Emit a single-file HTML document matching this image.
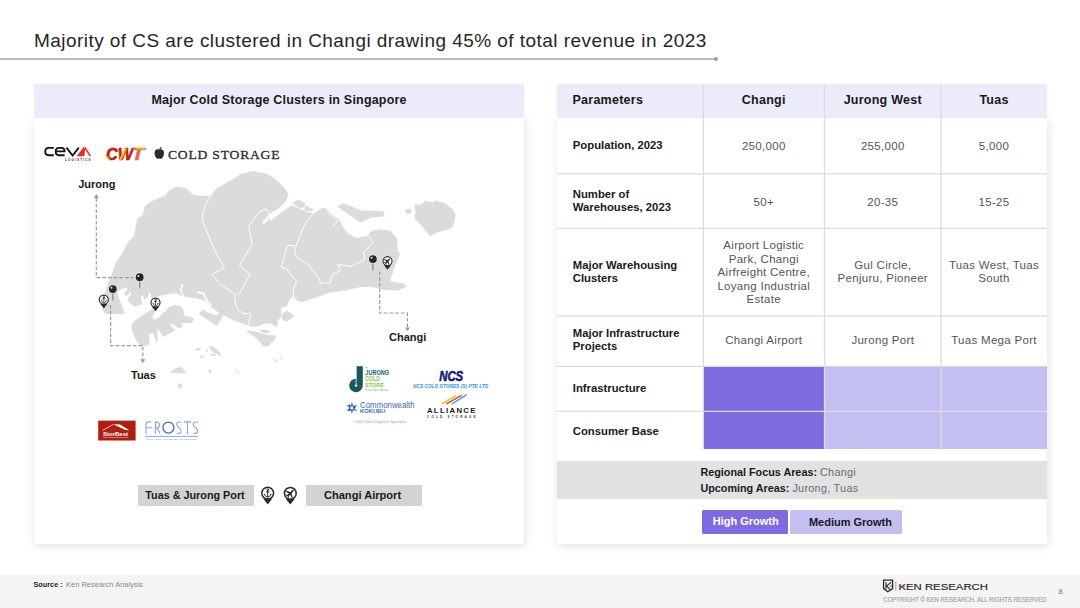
<!DOCTYPE html>
<html><head><meta charset="utf-8">
<style>
html,body{margin:0;padding:0;}
body{width:1080px;height:608px;position:relative;overflow:hidden;background:#fff;font-family:"Liberation Sans",sans-serif;color:#1f1f1f;}
.a{position:absolute;}
.t{position:absolute;line-height:1;white-space:nowrap;}
.b{font-weight:700;}
.c{text-align:center;}
.panel{position:absolute;background:#fff;box-shadow:1px 2px 9px rgba(0,0,0,0.12);}
.hdr{position:absolute;background:#ecebf9;}
.vl{position:absolute;width:1.3px;background:#dadada;}
.hl{position:absolute;height:1.3px;background:#dadada;}
.val{color:#555;font-size:11.5px;letter-spacing:0.3px;}
.lbl{font-size:11.3px;font-weight:700;color:#1a1a1a;}
</style></head><body>

<!-- Title -->
<div class="t" style="left:34px;top:31px;font-size:19px;letter-spacing:0.45px;color:#262626;">Majority of CS are clustered in Changi drawing 45% of total revenue in 2023</div>
<div class="a" style="left:0;top:58px;width:716px;height:1.8px;background:#bdbdbd;"></div>
<div class="a" style="left:714.3px;top:56.9px;width:4.2px;height:4.2px;border-radius:50%;background:#9a9a9a;"></div>

<!-- Left panel -->
<div class="panel" style="left:34px;top:118px;width:490px;height:426px;"></div>
<div class="hdr" style="left:34px;top:84px;width:490px;height:34px;"></div>
<div class="t b" style="left:151.5px;top:93.6px;font-size:12.5px;letter-spacing:0.2px;color:#1a1a1a;">Major Cold Storage Clusters in Singapore</div>

<!-- MAP -->
<svg class="a" style="left:0;top:0" width="1080" height="608" viewBox="0 0 1080 608">
<g fill="#dbdbdb">
<!-- mainland -->
<path d="M103,311 L106,314 L125,314 L116.7,291.9 L122,289 L126.5,287.6 L127.5,289.5 L123.5,293.5 L127,296 L130.5,292 L131.5,294 L127.5,298.5 L129,302.2 L134.4,306.7 L141.9,304.4 L141.1,296.3 L142.6,294.8 L144,299.3 L147,298.5 L149.3,292.6 L150.7,293.3 L151.5,299.3 L158,296.3 L161.9,295.5 L169.3,294.1 L176.7,293.3 L184,297 L190,297.5 L197,298.5 L205,300.5 L210.9,306.4 L218.3,312.4 L217.5,315.3 L213.1,314.6 L210.1,313.1 L207.2,312.4 L202.8,309 L199.1,314.2 L216.8,325.7 L223.5,315.3 L235.3,321.2 L241.8,323 L249,326.2 L256.3,326.7 L263.5,324 L269.9,323.1 L274.4,325.8 L277.1,326.7 L278,320.3 L279.8,318.5 L281.6,315.8 L280.7,308.6 L287.1,305.9 L288.9,300.4 L293.4,295.9 L296.1,299.5 L297.9,301.3 L302.2,302 L316,297.4 L329.9,292.8 L346,290.5 L360,287.1 L371.4,287 L385.3,290 L398,290.5 L406,287 L403.7,283.6 L389.9,281.3 L394.5,267.5 L400.2,253.7 L398,251.4 L396.8,237.6 L389.9,230.7 L379.6,229.2 L371.5,230.7 L367.4,235.8 L356.2,237.9 L347,232.8 L343,226.7 L339.9,220.5 L330.7,213.4 L325.1,207.8 L321.6,208.3 L313.4,213.9 L302.2,209.9 L291.9,205.3 L281.5,212.2 L270,221.4 L270,214.5 L286.1,203 L288.4,193.8 L284,187.6 L276,179.6 L266.8,173.8 L253,171 L241.4,173.8 L229.9,180.7 L216.1,188.8 L210.4,195.7 L200,195.7 L192.6,194.5 L186.7,188.6 L176.8,186.6 L169,190.6 L165,195.5 L153,200.5 L145.3,205.4 L142.3,215.3 L137.4,218.2 L135.4,227 L134.4,235 L127.5,242.9 L122.6,252.8 L115.7,262.6 L112.7,271.8 L108.7,281.7 L104,295 Z"/>
<!-- Jurong island -->
<path d="M131.2,325.5 L134.9,320.6 L145.6,313.2 L152.1,309 L155.4,310.7 L152.1,316.9 L154.2,319.7 L160.4,316.4 L161.2,314 L165.3,311.5 L167.8,307.8 L174.3,304.9 L180.1,305.8 L183.4,309.9 L184.2,315.6 L190.8,316.9 L194.5,319.3 L190.8,323 L181.7,323 L182.6,326.3 L179.3,328.4 L173.5,324.7 L169.4,323.8 L175.2,330.4 L162.8,337 L159.5,330.4 L157.1,329.6 L157.9,341.1 L156.3,341.9 L153,332.9 L148.8,334.5 L149.7,344.4 L141.4,346.9 L136.5,341.1 L132,331.3 Z"/>
<!-- sentosa etc -->
<path d="M246.3,330.3 L253.6,331.2 L259.9,333 L267.1,334.8 L276.2,335.7 L274.4,340.2 L270.8,343 L269,345.7 L263.5,346.6 L258.1,340.2 L252.7,335.7 L246.3,331.2 Z"/>
<path d="M259,330.5 L264,329.4 L269,330.5 L270.8,332.5 L265,333.2 Z"/>
<path d="M282.5,313.1 L287.1,310.8 L294.3,315.8 L293.4,317.6 L285.2,322.1 L281.6,318.5 Z"/>
<!-- Pulau Ubin -->
<path d="M336.8,206.3 L343,203.2 L351.1,206.3 L361.3,210.4 L372,210.8 L383.7,211.4 L384.7,216.5 L371.5,217.5 L360.3,222.6 L353.1,217.5 L343,210.4 Z"/>
<!-- Pulau Tekong -->
<path d="M414.1,204.6 L421.5,204.6 L425.2,200.6 L432.6,202.4 L435.2,200.2 L444.4,203.1 L453.3,209.8 L455.6,215.7 L452.6,227.6 L448.1,229.4 L436.3,232.8 L430.4,236.5 L421.5,226.1 L414.4,218 L415.6,212 Z"/>
<ellipse cx="408.4" cy="211.2" rx="3.2" ry="2.5"/>
<!-- small islands north -->
<path d="M293,202.2 L298.1,199.7 L305.3,203.2 L304.3,206.3 L300.2,208.8 L294.1,204.3 Z"/>
<path d="M305.3,205.3 L313.4,209.3 L312.4,211.4 L304.3,210.4 Z"/>
<!-- southern islands -->
<path d="M194.5,349.5 L198,347.8 L201.5,348.6 L198.5,350.8 Z"/>
<path d="M205.5,348 L207.3,349.5 L208.5,352.7 L206.5,351.5 Z"/>
<path d="M209.8,345.8 L213,346.5 L218,350.5 L222.5,356 L219,355 L214,352.5 L209.8,349 Z"/>
<path d="M210,353.5 L214.5,353.8 L217,355.5 L212,355.8 Z"/>
<path d="M200,355 L203.5,356.5 L204,358 L200.5,357.5 Z"/>
<path d="M170.1,372.1 L176.4,367.9 L180.6,366.5 L183.3,369.3 L186.1,372.1 L183.3,373.5 L170.8,372.8 Z"/>
<path d="M208.5,368.5 L211.5,371 L210.5,373.8 L208.8,372 Z"/>
<path d="M234,368 L237.5,371.5 L240,374 L237.5,373.5 Z"/>
<path d="M272.5,357.5 L276,360.5 L277.5,362.5 L275,362 Z"/>
<path d="M279.5,355.5 L282.5,358.5 L283,360 L280.5,358.5 Z"/>
<path d="M177.5,384.5 L181.5,383 L182.5,386.5 L178.5,389 Z"/>
</g>
<!-- white river / boundaries -->
<g fill="none" stroke="#fff" stroke-width="1" stroke-linejoin="round">
<path d="M210.7,196.1 Q205.5,203 205,207.6 Q201.5,214 202.7,221.4 Q208,234 213,246.8 Q218,258 224.5,267.5 L211.9,274.4 L219.9,283.6 L226.4,288.7 L236,294.6 L234.6,299.1 L236.5,306 L237.6,309.5 L242.9,313.4 L249.5,313.4 L250.8,316 L248.2,322.6 L249.5,326"/>
<path d="M270,216 L266,208.8 L259.1,212.2 L248.7,226.1 L252.2,244.5 L239.5,265.2 L249.9,274.4 L238.4,295.1"/>
<path d="M312.6,214.5 L306.8,221.4 L302.2,229.5 L297.6,242.2 L294.2,251.4 L297.6,258.3 L306.8,262.9 L319.5,279 L320.7,283.6 L330.4,282.5 L331.5,275.6 L340.7,269.9 L337.3,264.7 L351.1,266.4 L364.9,259.5 L363.7,252.6 L372.9,242.3 L368.3,235.4"/>
<path d="M295.3,245.6 L287.3,245.6 L283.8,258.3 L281.5,267.5 L286.1,268.6 L296.5,281.3 L293,290.5 L294.2,299.7 L289.6,300.9 L287.3,308.9 L283,312"/>

</g>
<g fill="none" stroke="#fff" stroke-width="3" stroke-linecap="round">
<path d="M288.6,200.3 L280,210 L272,214 L264,222"/>
</g>
<g fill="none" stroke="#fff" stroke-width="1.6" stroke-linecap="round">
<path d="M182.6,284.4 L180.5,290 L184,297"/>
<path d="M197.6,292.4 L202.8,293.1 L205.7,297.6 L207.2,301.3 L210.9,305"/>
<path d="M326.7,211.4 L337.9,221.6 L332.8,225.6" stroke-width="1"/>
</g>
</svg>

<!-- /MAP -->
<!-- PINS -->
<svg class="a" style="left:0;top:0" width="1080" height="608" viewBox="0 0 1080 608">
<defs>
<g id="pushpin">
<line x1="0" y1="3" x2="0" y2="11.3" stroke="#8d8d8d" stroke-width="1.3"/>
<circle r="4.4" fill="#fff" opacity="0.7"/>
<circle r="3.9" fill="#262626"/>
<circle cx="-1.3" cy="-1.3" r="1" fill="#fff" opacity="0.9"/>
</g>
<g id="pinbase">
<circle r="7.3" fill="#fff" opacity="0.55"/>
<circle r="5.9" fill="#fff" stroke="#2a2a2a" stroke-width="1.5"/>
<path d="M-4.6,5.4 L4.6,5.4 L0,11.3 Z" fill="#2a2a2a"/>
</g>
<g id="anchorpin">
<use href="#pinbase"/>
<g stroke="#2a2a2a" stroke-width="0.95" fill="none" stroke-linecap="round">
<circle cx="0" cy="-3.3" r="0.85"/>
<line x1="0" y1="-2.4" x2="0" y2="3.9"/>
<line x1="-1.4" y1="-1.2" x2="1.4" y2="-1.2"/>
<path d="M-3.2,1.3 Q-2.6,3.9 0,3.9 Q2.6,3.9 3.2,1.3"/>
</g>
<path d="M-3.9,1.8 L-3.2,0.6 L-2.4,1.9 Z M3.9,1.8 L3.2,0.6 L2.4,1.9 Z" fill="#2a2a2a"/>
</g>
<g id="planepin">
<use href="#pinbase"/>
<g transform="rotate(45) scale(1.08)">
<path d="M0,-4.2 C0.7,-4.2 0.8,-3.4 0.8,-2.7 L0.8,-0.9 L4.3,1.1 L4.3,2.1 L0.8,1 L0.8,2.7 L2,3.6 L2,4.2 L0,3.7 L-2,4.2 L-2,3.6 L-0.8,2.7 L-0.8,1 L-4.3,2.1 L-4.3,1.1 L-0.8,-0.9 L-0.8,-2.7 C-0.8,-3.4 -0.7,-4.2 0,-4.2 Z" fill="#2a2a2a"/>
</g>
</g>
</defs>
<g fill="none" stroke="#9b9b9b" stroke-width="1.2" stroke-dasharray="3.7 2">
<path d="M96.3,198 L96.3,277.6 L133.5,277.6"/>
<path d="M110.6,305 L110.6,345.6 L142.8,345.6 L142.8,359.5"/>
<path d="M379.7,271.5 L379.7,313 L407.4,313 L407.4,327.5"/>
</g>
<g fill="#9b9b9b">
<path d="M93.8,198.2 L96.3,194 L98.8,198.2 Z"/>
<path d="M140.3,359.3 L142.8,363.2 L145.3,359.3 Z"/>
<path d="M404.9,327.4 L407.4,331.2 L409.9,327.4 Z"/>
</g>
<use href="#pushpin" x="139.7" y="277.2"/>
<use href="#pushpin" x="112.8" y="289.1"/>
<use href="#pushpin" x="372.9" y="259.1"/>
<use href="#anchorpin" transform="translate(103.8,299.7) scale(0.77)"/>
<use href="#anchorpin" transform="translate(155.5,302.6) scale(0.77)"/>
<use href="#planepin" transform="translate(387.5,261.1) scale(0.77)"/>
<use href="#anchorpin" transform="translate(267.7,493.1)"/>
<use href="#planepin" transform="translate(290.3,493.3)"/>
</svg>

<div class="t b" style="left:78.2px;top:179px;font-size:11px;color:#1a1a1a;">Jurong</div>
<div class="t b" style="left:389px;top:332.4px;font-size:11px;color:#1a1a1a;">Changi</div>
<div class="t b" style="left:131px;top:370.2px;font-size:11px;color:#1a1a1a;">Tuas</div>
<div class="a" style="left:138.3px;top:485.3px;width:116px;height:20.3px;background:#d3d3d3;"></div>
<div class="a" style="left:305.8px;top:485.3px;width:116.7px;height:20.3px;background:#d3d3d3;"></div>
<div class="t b" style="left:145.3px;top:489.5px;font-size:10.8px;color:#1a1a1a;">Tuas &amp; Jurong Port</div>
<div class="t b" style="left:323.9px;top:489.5px;font-size:11.1px;color:#1a1a1a;">Changi Airport</div>
<!-- /PINS -->
<!-- LOGOS -->
<svg class="a" style="left:0;top:0" width="1080" height="608" viewBox="0 0 1080 608">
<!-- CEVA -->
<g fill="none" stroke="#141414" stroke-width="1.85" stroke-linecap="butt">
<path d="M53.8,147.9 H48.6 Q45.3,147.9 45.3,151.55 Q45.3,155.2 48.6,155.2 H53.8"/>
<path d="M64.6,155.2 H58.9 Q55.7,155.2 55.7,151.55 Q55.7,147.9 58.9,147.9 H61.4 Q64.6,147.9 64.6,151.3 H56"/>
<path d="M66.4,147.6 L72.6,155.6 L78.8,147.6"/>
</g>
<path d="M76.6,156.2 L83.7,146.9 L85.2,149.2 L84.3,156.2 Z" fill="#ee2a24"/>
<path d="M84.8,147.3 L90.3,156" stroke="#ee2a24" stroke-width="1.5" fill="none"/>
<text x="65.1" y="160.9" font-family="Liberation Sans" font-weight="700" font-size="3" textLength="25.5" lengthAdjust="spacing" fill="#333">LOGISTICS</text>
<!-- CWT -->
<text x="106" y="160.3" font-family="Liberation Sans" font-weight="700" font-style="italic" font-size="17" textLength="27" lengthAdjust="spacingAndGlyphs" fill="#c21d14" stroke="#b81a12" stroke-width="0.6">CW</text>
<text x="131" y="160.3" font-family="Liberation Sans" font-weight="700" font-style="italic" font-size="17" textLength="13.5" lengthAdjust="spacingAndGlyphs" fill="#dc6a5e" stroke="#dc6a5e" stroke-width="0.4">T</text>
<path d="M106.8,156.5 L109.5,160.2" stroke="#ffcc00" stroke-width="1.8"/>
<path d="M110.5,149.5 L114,148" stroke="#e8221a" stroke-width="1.6"/>
<path d="M120,160.2 L126,148.4" stroke="#ffcc00" stroke-width="2"/>
<path d="M136.5,148.4 L145,148.4" stroke="#ffcc00" stroke-width="1.5" fill="none"/>

<!-- apple -->
<g fill="#2b2b2b">
<path d="M159.3,149.6 C157.9,148.8 154.6,148.9 154.6,152.9 C154.6,156 156.5,158.8 157.9,158.8 C158.6,158.8 158.8,158.4 159.3,158.4 C159.8,158.4 160.1,158.8 160.8,158.8 C162.2,158.8 164,156 164,152.9 C164,148.9 160.7,148.8 159.3,149.6 Z"/>
<path d="M159.4,149.4 C159.3,148 160.3,147.1 161.6,146.9 C161.6,148.2 160.7,149.2 159.4,149.4 Z"/>
</g>
<text x="168" y="158.8" font-family="Liberation Serif" font-size="12.2" letter-spacing="0.7" textLength="112.3" lengthAdjust="spacingAndGlyphs" fill="#2e2e2e" stroke="#2e2e2e" stroke-width="0.3">COLD STORAGE</text>

<!-- Jurong Cold Store -->
<g fill="#16595a">
<rect x="356.6" y="366.2" width="6.2" height="19.6"/>
<path d="M362.8,385.5 A6.8,6.8 0 1 1 356.6,378.7 L356.6,385.5 Z"/>
</g>
<circle cx="356" cy="385.6" r="1.2" fill="#fff"/>
<line x1="356" y1="378" x2="356" y2="384.8" stroke="#fff" stroke-width="0.6"/>
<circle cx="366.6" cy="367.6" r="0.8" fill="#8cc63e"/>
<text x="365.3" y="374.6" font-family="Liberation Sans" font-weight="700" font-size="6.4" textLength="23.7" lengthAdjust="spacingAndGlyphs" fill="#1a5f7a">JURONG</text>
<text x="365" y="381" font-family="Liberation Sans" font-weight="700" font-size="6.4" textLength="15" lengthAdjust="spacingAndGlyphs" fill="#8cc63e">COLD</text>
<text x="365" y="386.6" font-family="Liberation Sans" font-weight="700" font-size="6.2" textLength="19" lengthAdjust="spacingAndGlyphs" fill="#8cc63e">STORE</text>
<text x="365.3" y="390.8" font-family="Liberation Sans" font-size="3" textLength="23.4" lengthAdjust="spacingAndGlyphs" fill="#9aa6bb">Fresh ideas Always</text>

<!-- NCS -->
<text x="439.2" y="381" font-family="Liberation Sans" font-weight="700" font-style="italic" font-size="14.2" textLength="24" lengthAdjust="spacingAndGlyphs" fill="#121a78" stroke="#121a78" stroke-width="0.6">NCS</text>
<text x="413" y="387.8" font-family="Liberation Sans" font-weight="700" font-style="italic" font-size="6.2" textLength="75.2" lengthAdjust="spacingAndGlyphs" fill="#2a95f0">NCS COLD STORES (S) PTE LTD</text>

<!-- Commonwealth Kokubu -->
<polygon points="351.90,401.70 353.20,405.65 357.27,404.80 354.50,407.90 357.27,411.00 353.20,410.15 351.90,414.10 350.60,410.15 346.53,411.00 349.30,407.90 346.53,404.80 350.60,405.65" fill="#4a7cbf"/>
<circle cx="351.9" cy="407.9" r="1.4" fill="#fff"/>
<circle cx="349.5" cy="405.3" r="0.8" fill="#0d2a7a"/>
<circle cx="354.5" cy="407.5" r="0.8" fill="#0d2a7a"/>
<circle cx="349.2" cy="410.3" r="0.8" fill="#0d2a7a"/>
<text x="360.1" y="408.2" font-family="Liberation Sans" font-size="8.2" textLength="54.5" lengthAdjust="spacingAndGlyphs" fill="#3b66b3">Commonwealth</text>
<text x="360.1" y="413.4" font-family="Liberation Sans" font-weight="700" font-size="6" textLength="25.3" lengthAdjust="spacingAndGlyphs" fill="#3b66b3">KOKUBU</text>
<text x="353.7" y="423.1" font-family="Liberation Serif" font-size="4.2" textLength="52.5" lengthAdjust="spacingAndGlyphs" fill="#7f9ad0">Cold Chain Logistics Specialist</text>

<!-- Alliance -->
<g stroke-width="1.5" stroke-linecap="round" fill="none">
<path d="M442.6,403.3 L455.5,396" stroke="#f4c21a"/>
<path d="M446.8,403.6 L461,395.6" stroke="#d8473c"/>
<path d="M452.4,403.6 L466,395" stroke="#4aa6e2"/>
</g>
<text x="426.9" y="413" font-family="Liberation Sans" font-weight="700" font-size="7.8" textLength="48.6" lengthAdjust="spacing" fill="#1b1b1b">ALLIANCE</text>
<text x="427" y="417.6" font-family="Liberation Sans" font-weight="700" font-size="3" textLength="48.5" lengthAdjust="spacing" fill="#333">COLD STORAGE</text>

<!-- StorBest -->
<rect x="98.2" y="420.6" width="37.4" height="19.9" fill="#b01e12"/>
<path d="M102.7,430.4 L113.4,424.4" stroke="#fff" stroke-width="0.7" fill="none"/>
<path d="M113.2,424.2 L120,424.4 L129.4,430.2 L125.5,430 Z" fill="#fff"/>
<text x="102.9" y="436" font-family="Liberation Sans" font-weight="700" font-size="6.2" textLength="25.2" lengthAdjust="spacingAndGlyphs" fill="#fff">StorBest</text>
<line x1="103" y1="437.6" x2="128.4" y2="437.6" stroke="#fff" stroke-width="0.5" opacity="0.85"/>

<!-- FROSTS -->
<g fill="none" stroke="#86a6db" stroke-width="1.1" stroke-linecap="round">
<path d="M146,433.4 L146,424.5 Q146,422 149,421.9 L150.5,421.9"/>
<path d="M146.2,427.7 L151.6,427.7"/>
<path d="M155.4,433.4 L155.4,422.1 Q159.6,421.9 159.6,424.9 Q159.6,427.9 155.6,427.9 L157.2,427.9 L159.9,433.4"/>
<path d="M181,422.3 Q176.6,421.3 176.6,424.2 Q176.6,426.3 179,427.8 Q181.3,429.4 181,431.6 Q180.6,433.6 177,433.3"/>
<path d="M184.2,421.9 L190.9,421.9 M187.5,421.9 L187.5,433.4"/>
<path d="M197.6,422.3 Q193.2,421.3 193.2,424.2 Q193.2,426.3 195.6,427.8 Q197.9,429.4 197.6,431.6 Q197.2,433.6 193.6,433.3"/>
</g>
<circle cx="168.4" cy="427.6" r="5.5" fill="none" stroke="#3f6fb0" stroke-width="1.3"/>
<line x1="145" y1="436.4" x2="197.8" y2="436.4" stroke="#6d92d3" stroke-width="0.8"/>
<text x="145.5" y="439.9" font-family="Liberation Sans" font-size="2.4" textLength="52" lengthAdjust="spacingAndGlyphs" fill="#7d9bd3">YOUR FOOD AND BEVERAGE SOLUTION</text>
</svg>

<!-- /LOGOS -->
<!-- Right panel -->
<div class="panel" style="left:557px;top:118px;width:490px;height:426px;"></div>
<div class="hdr" style="left:557px;top:84px;width:490px;height:34px;"></div>


<!-- Table header texts -->
<div class="t b" style="left:572.5px;top:93.6px;font-size:12.5px;letter-spacing:0.25px;color:#1a1a1a;">Parameters</div>
<div class="t b c" style="left:703px;width:121.5px;top:93.6px;font-size:12.5px;letter-spacing:0.25px;color:#1a1a1a;">Changi</div>
<div class="t b c" style="left:824.5px;width:116.5px;top:93.6px;font-size:12.5px;letter-spacing:0.25px;color:#1a1a1a;">Jurong West</div>
<div class="t b c" style="left:941px;width:106px;top:93.6px;font-size:12.5px;letter-spacing:0.25px;color:#1a1a1a;">Tuas</div>

<!-- purple cells -->
<div class="a" style="left:703.7px;top:366.8px;width:120.8px;height:82.2px;background:#7e6bdf;"></div>
<div class="a" style="left:824.5px;top:366.8px;width:222.5px;height:82.2px;background:#c3bff1;"></div>

<!-- grid lines -->
<svg class="a" style="left:0;top:0" width="1080" height="608" viewBox="0 0 1080 608">
<g stroke="#dcdcdc" stroke-width="1.3">
<line x1="703.4" y1="84" x2="703.4" y2="449"/>
<line x1="824.5" y1="84" x2="824.5" y2="449"/>
<line x1="941" y1="84" x2="941" y2="449"/>
<line x1="557" y1="173.9" x2="1047" y2="173.9"/>
<line x1="557" y1="228.4" x2="1047" y2="228.4"/>
<line x1="557" y1="315.9" x2="1047" y2="315.9"/>
<line x1="557" y1="366.4" x2="1047" y2="366.4"/>
<line x1="557" y1="411.4" x2="1047" y2="411.4"/>
</g>
</svg>
<!-- row labels -->
<div class="t lbl" style="left:572.8px;top:139.7px;">Population, 2023</div>
<div class="t lbl" style="left:572.8px;top:188px;line-height:13.2px;">Number of<br>Warehouses, 2023</div>
<div class="t lbl" style="left:572.8px;top:258.9px;line-height:13.2px;">Major Warehousing<br>Clusters</div>
<div class="t lbl" style="left:572.8px;top:327.1px;line-height:13.2px;">Major Infrastructure<br>Projects</div>
<div class="t lbl" style="left:572.8px;top:382.8px;">Infrastructure</div>
<div class="t lbl" style="left:572.8px;top:425.5px;">Consumer Base</div>

<!-- values -->
<div class="t val c" style="left:703px;width:121.5px;top:140.7px;">250,000</div>
<div class="t val c" style="left:824.5px;width:116.5px;top:140.7px;">255,000</div>
<div class="t val c" style="left:941px;width:106px;top:140.7px;">5,000</div>
<div class="t val c" style="left:703px;width:121.5px;top:197.3px;">50+</div>
<div class="t val c" style="left:824.5px;width:116.5px;top:197.3px;">20-35</div>
<div class="t val c" style="left:941px;width:106px;top:197.3px;">15-25</div>
<div class="t val c" style="left:703px;width:121.5px;top:239.3px;line-height:13.5px;">Airport Logistic<br>Park, Changi<br>Airfreight Centre,<br>Loyang Industrial<br>Estate</div>
<div class="t val c" style="left:824.5px;width:116.5px;top:258.8px;line-height:13.2px;">Gul Circle,<br>Penjuru, Pioneer</div>
<div class="t val c" style="left:941px;width:106px;top:258.8px;line-height:13.2px;">Tuas West, Tuas<br>South</div>
<div class="t val c" style="left:703px;width:121.5px;top:335.2px;">Changi Airport</div>
<div class="t val c" style="left:824.5px;width:116.5px;top:335.2px;">Jurong Port</div>
<div class="t val c" style="left:941px;width:106px;top:335.2px;">Tuas Mega Port</div>

<!-- grey band -->
<div class="a" style="left:557px;top:461px;width:490px;height:38px;background:#e2e2e2;"></div>
<div class="t" style="left:700.4px;top:467px;font-size:10.8px;"><b style="color:#1a1a1a">Regional Focus Areas:</b> <span style="color:#6a6a6a;letter-spacing:0.3px">Changi</span></div>
<div class="t" style="left:700.4px;top:482.5px;font-size:10.8px;"><b style="color:#1a1a1a">Upcoming Areas:</b> <span style="color:#6a6a6a;letter-spacing:0.3px">Jurong, Tuas</span></div>

<!-- legend -->
<div class="a" style="left:702.2px;top:509.6px;width:86px;height:24.4px;background:#7e6bdf;border-radius:1.5px;"></div>
<div class="a" style="left:790px;top:509.6px;width:111.6px;height:24.4px;background:#c3bff1;border-radius:1.5px;"></div>
<div class="t b" style="left:712.7px;top:515.7px;font-size:11px;color:#fff;">High Growth</div>
<div class="t b" style="left:808.9px;top:516.6px;font-size:11px;color:#1a1a1a;">Medium Growth</div>


<!-- Footer -->
<div class="a" style="left:0;top:575px;width:1080px;height:33px;background:#f4f4f4;box-shadow:0 -0.5px 1px rgba(0,0,0,0.05);"></div>
<div class="t b" style="left:33.5px;top:581px;font-size:7.3px;color:#222;">Source :</div>
<div class="t" style="left:66px;top:581px;font-size:7.5px;color:#8a8a8a;">Ken Research Analysis</div>

<!-- FOOTLOGO -->
<svg class="a" style="left:0;top:0" width="1080" height="608" viewBox="0 0 1080 608">
<path d="M883.6,580.2 L892.6,580.2 L892.6,588.6 L887.8,591.8 L883.6,588.6 Z" fill="#fff" stroke="#2a2a2a" stroke-width="1.3"/>
<path d="M886,582 L886,589.5 M891.2,582.2 L886.5,586 L890.8,590" fill="none" stroke="#2a2a2a" stroke-width="1.1"/>
<circle cx="891" cy="586" r="0.9" fill="#e0302a"/>
<line x1="895.8" y1="581.6" x2="895.8" y2="590.4" stroke="#888" stroke-width="0.8"/>
<text x="898.4" y="589.6" font-family="Liberation Sans" font-size="9.3" textLength="89.6" lengthAdjust="spacingAndGlyphs" fill="#1e1e1e" stroke="#1e1e1e" stroke-width="0.12">KEN RESEARCH</text>
<circle cx="903.9" cy="586.3" r="0.9" fill="#e0302a"/>
<text x="883.3" y="602" font-family="Liberation Sans" font-size="6.3" textLength="163" lengthAdjust="spacingAndGlyphs" fill="#a3a3a3" stroke="#a3a3a3" stroke-width="0.15">COPYRIGHT © KEN RESEARCH. ALL RIGHTS RESERVED</text>
<text x="1058.5" y="593.7" font-family="Liberation Sans" font-size="7.6" fill="#7a7a7a">8</text>
</svg>
<!-- /FOOTLOGO -->
</body></html>
